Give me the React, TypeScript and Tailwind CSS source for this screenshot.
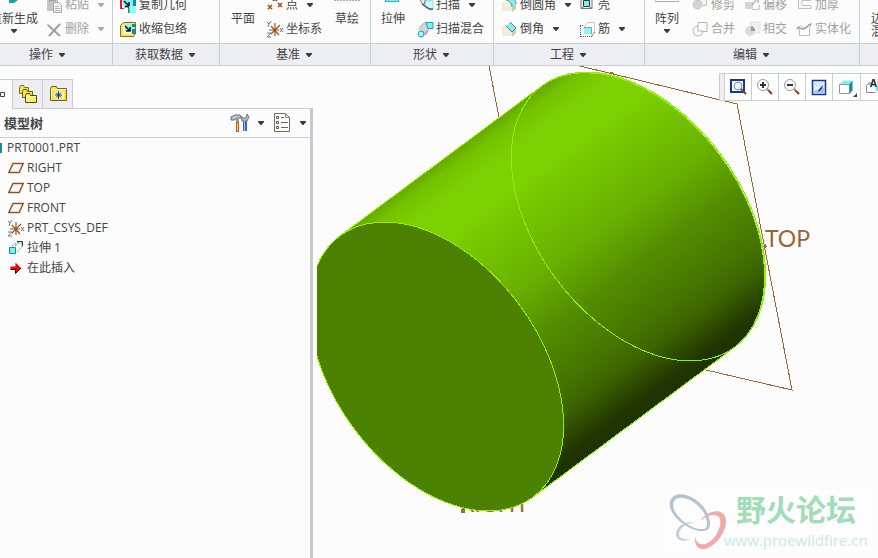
import type { ReactNode } from "react";
import clsx from "clsx";

const FONT =
  "font-['Open_Sans','Noto_Sans_CJK_SC',sans-serif] text-[12px] leading-[16px] text-[#444]";

type IconProps = { children: ReactNode; size?: number };

const Icon = ({ children, size = 17 }: IconProps) => (
  <svg
    width={size}
    height={size}
    viewBox={`0 0 ${size} ${size}`}
    fill="none"
    className="shrink-0"
    aria-hidden="true"
  >
    {children}
  </svg>
);

const Caret = ({ muted = false }: { muted?: boolean }) => (
  <svg width="6" height="4" viewBox="0 0 6 4" className="shrink-0" aria-hidden="true">
    <path d="M0 0h6v1L3.5 4h-1L0 1z" fill={muted ? "#a9a9a9" : "#3c3c3c"} />
  </svg>
);

/* ---------- ribbon icons ---------- */

const PasteIcon = () => (
  <Icon>
    <path d="M1 2h11v12H1z" fill="#c4c4c4" />
    <path d="M3 0h7v4H3z" fill="#a0a0a0" />
    <path d="M7.500 5.500h5l3 3v7h-8z" fill="#f4f4f4" stroke="#a8a8a8" />
    <path d="M9 9.500h4M9 11.500h5M9 13.500h5" stroke="#b5b5b5" />
  </Icon>
);

const DeleteIcon = () => (
  <Icon>
    <path d="M2 4l12 11M14 3L3 15" stroke="#a0a0a0" strokeWidth="2" />
    <path d="M1 3l3 2M2 15l2-2" stroke="#bdbdbd" />
  </Icon>
);

const CopyGeomIcon = () => (
  <Icon>
    <path d="M0 1h4v11H0z" fill="#e02020" />
    <path d="M2 1h9v10H2z" fill="#fff" />
    <path d="M2 3h12v8H4z" fill="#86eef2" />
    <path d="M4 4l5 5M9 5v4.500H5" stroke="#111" strokeWidth="1.500" />
    <path d="M9 9h7v7H9z" fill="#8ff8fa" />
    <path d="M13 3h3v6h-3zM8 10h1.500v6H8z" fill="#0d8f92" />
  </Icon>
);

const ShrinkwrapIcon = () => (
  <Icon>
    <path d="M.5 4.500l3-3h12v11l-2 3H.5z" fill="#f7e46a" stroke="#8b6d12" />
    <path d="M3 4h9v9H3z" fill="#fff6b8" />
    <path d="M5 3h9v7H5z" fill="#8df3f5" />
    <path d="M5 5l5 5M10 6v4H6" stroke="#111" strokeWidth="1.500" />
    <path d="M12 3h4v3h-4zM12 8h4v5h-4z" fill="#148a8c" />
  </Icon>
);

const PointIcon = () => (
  <Icon>
    <path
      d="M6 0l4 4M10 0L6 4M1 8l4 4M5 8l-4 4M11 6l4 4M15 6l-4 4"
      stroke="#96521e"
      strokeWidth="1.600"
    />
  </Icon>
);

const CsysIcon = () => (
  <Icon>
    <path
      d="M2 9h10M8 2v13M4 5l8 9M13 4L4 13"
      stroke="#9a5622"
      strokeWidth="1.200"
    />
    <path
      d="M0 1l2 2 2-3M2 3L1 6M13 7l3 4M16 7l-3 4M0 12h4l-4 4h4"
      stroke="#777"
    />
  </Icon>
);

const SweepIcon = () => (
  <Icon>
    <path d="M5 3l9-3 2 12-5 1z" fill="#d6d6d6" />
    <path d="M9 4l7-1v9l-8-1z" fill="#cffafa" stroke="#9adfe0" />
    <path d="M1.500.5l7 2-2 6z" fill="#eee" stroke="#777" />
    <path d="M5 7l9 6" stroke="#555" strokeWidth="1.500" />
    <path d="M13 12h3" stroke="#0fa5aa" strokeWidth="2" />
  </Icon>
);

const SweptBlendIcon = () => (
  <Icon>
    <path d="M3 9c1-5 4-8 9-8l4 6c-5 0-7 4-9 8z" fill="#d4d4d4" />
    <path d="M2 9c1-4 4-7 8-8" stroke="#aaa" />
    <path d="M9 1.500h7v6h-5z" fill="#86eef2" stroke="#0fa5aa" />
    <circle cx="4" cy="13" r="3" fill="#a8f6f6" stroke="#0fa5aa" />
    <path d="M8 14l3-5" stroke="#aaa" strokeWidth="2" />
  </Icon>
);

const RoundIcon = () => (
  <Icon>
    <path d="M1 5h7l3 4v5H1z" fill="#efecdc" />
    <path d="M11 9l4-3v6l-4 3z" fill="#cfcab0" />
    <path d="M3 2l5-2c4 1 7 4 7 7l-4 4c0-4-3-7-8-9z" fill="#86eef2" />
    <path d="M5 3c4 1 6 4 6 7M9 0c4 1 6 4 6 7" stroke="#5f8a89" />
  </Icon>
);

const ChamferIcon = () => (
  <Icon>
    <path d="M1 5h5l5 6v4H1z" fill="#efecdc" />
    <path d="M11 11l4-4v5l-4 4z" fill="#cfcab0" />
    <path d="M5 5l4-4 6 6-4 4z" fill="#86eef2" />
    <path d="M5 5l6 6 4-4M9 1l6 6" stroke="#5f7675" />
  </Icon>
);

const ShellIcon = () => (
  <Icon>
    <path d="M2 1.500h11v10H2z" fill="#f4f4f4" stroke="#777" />
    <path d="M4.500 3.500h6v6h-6z" fill="#7ff0f2" stroke="#333" />
    <path d="M2 11.500l3-2M13 11.500l-3-2" stroke="#777" />
  </Icon>
);

const RibIcon = () => (
  <Icon>
    <path d="M4.500 6.500l4-5h7v9l-3 5" stroke="#c8c8c8" />
    <path d="M5 7h7v6H5z" fill="#86f8fa" />
    <path d="M1 4.500h3M1.500 5v11M2 15.500h11M13 15l3-4" stroke="#555" strokeDasharray="1 1" />
    <path d="M5 6.500h7.500V13" stroke="#999" />
  </Icon>
);

const TrimIcon = () => (
  <Icon>
    <path d="M6.500.5h8v8h-4" fill="#f4f4f4" stroke="#c0c0c0" />
    <circle cx="5.500" cy="7.500" r="4.500" fill="#d4d4d4" stroke="#c4c4c4" />
  </Icon>
);

const MergeIcon = () => (
  <Icon>
    <path d="M6 5.500v-4h9v9h-4" stroke="#b4b4b4" />
    <path d="M6 5a5 5 0 1 0 5 5H6z" stroke="#b4b4b4" />
  </Icon>
);

const OffsetIcon = () => (
  <Icon>
    <path d="M1 5h8v7H1z" fill="#d4d4d4" />
    <path d="M1 1h7M15.500 8v4" stroke="#b5b5b5" strokeDasharray="2 1" />
    <path d="M8 8l5-6M10 1.500h4V6" stroke="#888" />
    <path d="M8 12.500h7V9" stroke="#c5c5c5" />
  </Icon>
);

const IntersectIcon = () => (
  <Icon>
    <path d="M6 1h10v11H9z" fill="#f0f0f0" stroke="#e4e4e4" />
    <circle cx="6" cy="10" r="5" fill="#dadada" />
    <path d="M7 5a5 5 0 0 1 4 5H7z" fill="#9c9c9c" />
  </Icon>
);

const ThickenIcon = () => (
  <Icon>
    <path d="M15 .5H2.500v11H15v-3H6V3.500h9" fill="#f8f8f8" stroke="#c0c0c0" />
  </Icon>
);

const SolidifyIcon = () => (
  <Icon>
    <path d="M3.500 14.500v-6l-3-1 4-3 3 2c2 1 4-2 8-4l-2 4v8z" stroke="#bcbcbc" />
    <path d="M1 7c3-2 4 2 7 1s3-4 7-5" stroke="#8f8f8f" strokeWidth="1.200" />
  </Icon>
);

/* ---------- ribbon ---------- */

type ToolProps = {
  icon: ReactNode;
  label: string;
  menu?: boolean;
  muted?: boolean;
};

const Tool = ({ icon, label, menu = false, muted = false }: ToolProps) => (
  <button
    type="button"
    className={clsx(
      "flex h-6 items-center whitespace-nowrap",
      muted && "text-[#a0a0a0]"
    )}
  >
    {icon}
    <span className="ml-[2px]">{label}</span>
    {menu && (
      <span className="ml-[9px]">
        <Caret muted={muted} />
      </span>
    )}
  </button>
);

type BigToolProps = { label: string; menu?: boolean; children?: ReactNode };

const BigTool = ({ label, menu = false, children }: BigToolProps) => (
  <button
    type="button"
    className="flex h-[43px] flex-col items-center whitespace-nowrap"
  >
    <span className="flex h-[11px] items-start">{children}</span>
    <span>{label}</span>
    {menu && (
      <span className="mt-[2px] flex">
        <Caret />
      </span>
    )}
  </button>
);

type GroupProps = { title: string; width: string; children: ReactNode };

const Group = ({ title, width, children }: GroupProps) => (
  <section className={clsx("flex shrink-0 flex-col border-r border-[#c9ccd0]", width)}>
    <div className="flex h-[43px] items-end pb-[2px]">{children}</div>
    <button
      type="button"
      className="flex h-[23px] items-center justify-center gap-[6px] border-y border-[#c9ccd0] bg-[#edeef1] pr-[2px]"
    >
      {title}
      <Caret />
    </button>
  </section>
);

const Column = ({ children }: { children: ReactNode }) => (
  <div className="flex shrink-0 flex-col">{children}</div>
);

const Ribbon = () => (
  <header className="-ml-4 flex h-[66px] overflow-hidden">
    <Group title="操作" width="w-[129px]">
      <div className="ml-[6px] -mb-[2px]">
        <BigTool label="重新生成" menu>
          <svg width="10" height="4" viewBox="0 0 10 4" aria-hidden="true">
            <path d="M0 0h9L5 3H0z" fill="#1aa3a6" />
          </svg>
        </BigTool>
      </div>
      <div className="ml-2">
        <Column>
          <Tool icon={<PasteIcon />} label="粘贴" menu muted />
          <Tool icon={<DeleteIcon />} label="删除" menu muted />
        </Column>
      </div>
    </Group>

    <Group title="获取数据" width="w-[107px]">
      <div className="ml-[7px]">
        <Column>
          <Tool icon={<CopyGeomIcon />} label="复制几何" />
          <Tool icon={<ShrinkwrapIcon />} label="收缩包络" />
        </Column>
      </div>
    </Group>

    <Group title="基准" width="w-[151px]">
      <div className="ml-[11px] -mb-[2px]">
        <BigTool label="平面" />
      </div>
      <div className="ml-3">
        <Column>
          <Tool icon={<PointIcon />} label="点" menu />
          <Tool icon={<CsysIcon />} label="坐标系" />
        </Column>
      </div>
      <div className="ml-3 -mb-[2px]">
        <BigTool label="草绘">
          <svg width="26" height="1" viewBox="0 0 26 1" aria-hidden="true">
            <path d="M0 .5h26" stroke="#aaa" strokeDasharray="2 1" />
          </svg>
        </BigTool>
      </div>
    </Group>

    <Group title="形状" width="w-[123px]">
      <div className="ml-[10px] -mb-[2px]">
        <BigTool label="拉伸">
          <svg width="18" height="2" viewBox="0 0 18 2" aria-hidden="true">
            <path d="M1 0h14v2H1z" fill="#2bb3b7" />
            <path d="M2 0h12v1H2z" fill="#86eef2" />
          </svg>
        </BigTool>
      </div>
      <div className="ml-3">
        <Column>
          <Tool icon={<SweepIcon />} label="扫描" menu />
          <Tool icon={<SweptBlendIcon />} label="扫描混合" />
        </Column>
      </div>
    </Group>

    <Group title="工程" width="w-[151px]">
      <div className="ml-[7px] flex gap-2">
        <Column>
          <Tool icon={<RoundIcon />} label="倒圆角" menu />
          <Tool icon={<ChamferIcon />} label="倒角" menu />
        </Column>
        <Column>
          <Tool icon={<ShellIcon />} label="壳" />
          <Tool icon={<RibIcon />} label="筋" menu />
        </Column>
      </div>
    </Group>

    <Group title="编辑" width="w-[215px]">
      <div className="ml-[10px] -mb-[2px]">
        <BigTool label="阵列" menu>
          <svg width="24" height="2" viewBox="0 0 24 2" aria-hidden="true">
            <path d="M0 0v1.500h24V0" fill="none" stroke="#aaa" />
          </svg>
        </BigTool>
      </div>
      <div className="ml-[13px] flex gap-[9px]">
        <Column>
          <Tool icon={<TrimIcon />} label="修剪" muted />
          <Tool icon={<MergeIcon />} label="合并" muted />
        </Column>
        <Column>
          <Tool icon={<OffsetIcon />} label="偏移" muted />
          <Tool icon={<IntersectIcon />} label="相交" muted />
        </Column>
        <Column>
          <Tool icon={<ThickenIcon />} label="加厚" muted />
          <Tool icon={<SolidifyIcon />} label="实体化" muted />
        </Column>
      </div>
    </Group>

    <section className="flex min-w-0 grow flex-col overflow-hidden">
      <div className="flex h-[43px] items-end pb-[5px] pl-[11px]">
        <button type="button" className="flex shrink-0 flex-col leading-[13px]">
          <span>边界</span>
          <span>混合</span>
        </button>
      </div>
      <div className="h-[23px] border-y border-[#c9ccd0] bg-[#edeef1]" />
    </section>
  </header>
);

/* ---------- model tree ---------- */

const FoldersIcon = () => (
  <Icon size={20}>
    <path d="M1.500 3.500l1-2h3l1 2h4v6h-9z" fill="#f2e14e" stroke="#7d6e2c" />
    <path d="M4.500 7.500l1-2h3l1 2h5v6h-10z" fill="#f2e14e" stroke="#6a5c24" />
    <path d="M7.500 11.500l1-2h3l1 2h6v7h-11z" fill="#fbee5c" stroke="#4d4218" />
    <path d="M8.500 18v-5.500H18" stroke="#fffbd0" />
  </Icon>
);

const FavoritesIcon = () => (
  <Icon size={20}>
    <path d="M2.500 4.500l1-2h5l1 2h9v12h-16z" fill="#f7e03a" stroke="#6e6324" />
    <path d="M3.500 16V5.500H18" stroke="#fffbd0" />
    <path d="M6 7h10v8H6z" fill="#fff79a" />
    <path d="M10.500 7v8M7 11h7M8 8.500l5 5M13 8.500l-5 5" stroke="#1030b8" />
  </Icon>
);

const ToolsIcon = () => (
  <Icon size={20}>
    <path d="M1 7V4l4-2h5l2 3H7L4 7z" fill="#c4c8ca" stroke="#666" />
    <path d="M6 6h3v3H6z" fill="#999" />
    <path d="M6 9h3v10H6z" fill="#c85a14" />
    <path d="M7.500 10v8" stroke="#f5d08a" />
    <path d="M11 3l2 2h3l1-4 2 3-2 4h-5z" fill="#b4b8ba" stroke="#777" />
    <path d="M13 8h4v10h-4z" fill="#2f66c8" />
    <path d="M14.500 7v11" stroke="#9cc2f5" />
  </Icon>
);

const ListIcon = () => (
  <Icon size={20}>
    <path d="M2.500.5h11l4 4v14h-15z" fill="#fdfdf6" stroke="#6c6c62" />
    <path d="M13.500.5v4h4" stroke="#888" />
    <path d="M9 4.500h3M9 9.500h7M9 14.500h7" stroke="#666" />
    <path d="M4.500 3.500h2v2h-2zM4.500 8.500h2v2h-2zM4.500 13.500h2v2h-2z" stroke="#555" />
  </Icon>
);

const PlaneIcon = () => (
  <Icon size={16}>
    <path d="M.8 12.500L5 3.500h10.200l-4 9z" stroke="#96521e" strokeWidth="1.500" />
  </Icon>
);

const ExtrudeIcon = () => (
  <Icon size={16}>
    <path d="M4 6l6-4h4v5l-5 5" stroke="#888" strokeDasharray="2 1" />
    <path d="M9 1.500h5.500V6" stroke="#333" />
    <path d="M7 6l5-4" stroke="#1aa3a6" strokeDasharray="2 1" />
    <path d="M1.500 7.500h6v6h-6z" fill="#86eef2" stroke="#178f92" />
  </Icon>
);

const InsertIcon = () => (
  <Icon size={16}>
    <path d="M2.500 6.500h5v-4l5.500 5.500-5.500 5.500v-4h-5z" fill="#f00" />
    <path d="M2.500 9.500h5v4L13 8" stroke="#3a0000" />
  </Icon>
);

const items = [
  { label: "RIGHT", icon: <PlaneIcon /> },
  { label: "TOP", icon: <PlaneIcon /> },
  { label: "FRONT", icon: <PlaneIcon /> },
  { label: "PRT_CSYS_DEF", icon: <CsysIcon /> },
  { label: "拉伸 1", icon: <ExtrudeIcon /> },
  { label: "在此插入", icon: <InsertIcon /> },
];

const ModelTree = () => (
  <aside className="flex w-[313px] shrink-0 flex-col pt-[13px]">
    <div className="flex">
      <button
        type="button"
        aria-label="模型树"
        className="flex h-[30px] w-3 items-center border-t border-[#c9ccd0]"
      >
        <svg width="5" height="5" viewBox="0 0 5 5" fill="none" aria-hidden="true">
          <path d="M.5.5h4v4h-4z" stroke="#444" />
        </svg>
      </button>
      <button
        type="button"
        aria-label="文件夹浏览器"
        className="flex h-[30px] w-[31px] items-center justify-center border border-[#c9ccd0] bg-[#edeef1]"
      >
        <FoldersIcon />
      </button>
      <button
        type="button"
        aria-label="收藏夹"
        className="flex h-[30px] w-[30px] items-center justify-center border border-l-0 border-[#c9ccd0] bg-[#edeef1]"
      >
        <FavoritesIcon />
      </button>
      <div className="grow border-b border-[#c9ccd0]" />
    </div>
    <div className="flex grow flex-col border-r-[3px] border-[#c5c9cc]">
      <div className="flex h-[29px] items-center border-b border-[#c9ccd0] pr-1 pl-1">
        <h2 className="grow text-[13px] font-bold">模型树</h2>
        <button type="button" aria-label="设置" className="flex items-center gap-2">
          <ToolsIcon />
          <Caret />
        </button>
        <button type="button" aria-label="显示" className="ml-2 flex items-center gap-2">
          <ListIcon />
          <Caret />
        </button>
      </div>
      <div className="flex h-5 items-center">
        <span className="h-[10px] w-[2px] bg-[#178f92]" />
        <span className="ml-[5px]">PRT0001.PRT</span>
      </div>
      <ul>
        {items.map((item) => (
          <li key={item.label} className="flex h-5 items-center pl-2">
            <span className="flex w-[19px] shrink-0">{item.icon}</span>
            {item.label}
          </li>
        ))}
      </ul>
    </div>
  </aside>
);

/* ---------- graphics area ---------- */

const Lens = () => (
  <>
    <circle cx="8" cy="8" r="5.500" fill="#fff" stroke="#9a9a9a" />
    <path d="M12 12l5 5" stroke="#7c4028" strokeWidth="2" />
    <path d="M12 12l1.500 1.500" stroke="#c8a060" strokeWidth="2" />
  </>
);

const viewTools = [
  {
    label: "重新调整",
    icon: (
      <Icon size={20}>
        <path d="M3 3h13v12H3z" stroke="#0b3a9c" strokeWidth="2" />
        <circle cx="10" cy="9" r="4" fill="#e8f2f2" stroke="#888" />
        <path d="M13 12l5 5" stroke="#7c4028" strokeWidth="2" />
      </Icon>
    ),
  },
  {
    label: "放大",
    icon: (
      <Icon size={20}>
        <Lens />
        <path d="M5 8h6M8 5v6" stroke="#333" strokeWidth="2" />
      </Icon>
    ),
  },
  {
    label: "缩小",
    icon: (
      <Icon size={20}>
        <Lens />
        <path d="M5 8h6" stroke="#333" strokeWidth="2" />
      </Icon>
    ),
  },
  {
    label: "重画",
    icon: (
      <Icon size={20}>
        <path d="M3.500 3.500h13v14h-13z" fill="#e4f0f8" stroke="#0b3a9c" strokeWidth="1.500" />
        <path d="M5 14l10-4v6H5z" fill="#a9c6e6" />
        <path d="M6 6.500h8M7 8.500h8" stroke="#b4c4d0" strokeDasharray="1 2" />
        <path d="M9 15c1-3 2-4 5-7-1 4-2 6-5 7z" fill="#1c3f94" />
      </Icon>
    ),
  },
];

const ViewToolbar = () => (
  <div className="absolute top-[7px] right-0 flex h-7 w-[159px] overflow-hidden border border-r-0 border-[#c9ccd0] bg-[#edeef1] pl-1">
    {viewTools.map((tool) => (
      <button
        key={tool.label}
        type="button"
        aria-label={tool.label}
        className="flex w-[27px] shrink-0 items-center justify-center border-l border-[#c9ccd0] bg-white"
      >
        {tool.icon}
      </button>
    ))}
    <button
      type="button"
      aria-label="显示样式"
      className="flex w-[28px] shrink-0 items-center justify-center border-l border-[#c9ccd0] bg-white"
    >
      <svg width="22" height="22" viewBox="0 0 22 22" fill="none" aria-hidden="true">
        <path d="M3.500 8.500h10v9h-10z" fill="#fff" stroke="#8a9a9a" />
        <path d="M3.500 8l4-3.500h9l-3 3.500z" fill="#7ff0f2" />
        <path d="M13.500 8l3-3.500v10l-3 3.500z" fill="#0e8f92" />
        <path d="M21 17v4h-4z" fill="#444" />
      </svg>
    </button>
    <button
      type="button"
      aria-label="已命名视图"
      className="flex w-[27px] shrink-0 items-center border-l border-[#c9ccd0] bg-white pl-1"
    >
      <svg width="22" height="20" viewBox="0 0 22 20" fill="none" aria-hidden="true">
        <path d="M5.500 5.500h-1l-3 3v7h9" stroke="#888" />
        <path d="M2 8l3-2.500h2l-1 2.500zM11 10h4v4h-4z" fill="#5fe3e6" />
        <text x="5" y="10" fontSize="10" fontWeight="bold" fill="#222">
          AB
        </text>
      </svg>
    </button>
  </div>
);

const Model = () => (
  <svg
    width="561"
    height="492"
    viewBox="317 66 561 492"
    fill="none"
    className="ml-1 block max-w-none"
    role="img"
    aria-label="PRT0001"
  >
    <defs>
      <linearGradient
        id="side"
        gradientUnits="userSpaceOnUse"
        x1="542.300"
        y1="85.600"
        x2="734.500"
        y2="347.400"
      >
        <stop offset="0" stopColor="#64a800" />
        <stop offset=".04" stopColor="#74c200" />
        <stop offset=".1" stopColor="#7ccf00" />
        <stop offset=".2" stopColor="#7dd100" />
        <stop offset=".28" stopColor="#76c600" />
        <stop offset=".36" stopColor="#70bd00" />
        <stop offset=".46" stopColor="#69b000" />
        <stop offset=".54" stopColor="#5e9f00" />
        <stop offset=".62" stopColor="#538c00" />
        <stop offset=".7" stopColor="#4c8000" />
        <stop offset=".78" stopColor="#457300" />
        <stop offset=".85" stopColor="#3c6400" />
        <stop offset=".91" stopColor="#2d4b00" />
        <stop offset=".96" stopColor="#203500" />
        <stop offset="1" stopColor="#1e3200" />
      </linearGradient>
    </defs>
    <g shapeRendering="crispEdges" stroke="#996633">
      <path d="M489 66l10 51M580 66l157 38 55 286-86-20" />
      <path d="M609 76v-2l3-2 2 3M461 509h3v3h-3zM763 246h4M765 244v4" />
    </g>
    <g fill="#996633" fontFamily="Lato, sans-serif" fontSize="23">
      <text x="765" y="247">
        TOP
      </text>
      <text x="460" y="512">
        RIGHT
      </text>
    </g>
    <g shapeRendering="crispEdges" stroke="#94f000">
      <path
        d="M340.400 235.600L542.300 85.600A162.400 103.300 53.700 0 1 734.500 347.400L532.600 497.400z"
        fill="url(#side)"
      />
      <ellipse
        rx="162.400"
        ry="103.300"
        transform="translate(638.400 216.500) rotate(53.700)"
      />
      <ellipse
        rx="162.400"
        ry="103.300"
        transform="translate(436.500 366.500) rotate(53.700)"
        fill="#4c8000"
      />
    </g>
  </svg>
);

const Watermark = () => (
  <div className="absolute right-[6px] bottom-1 flex h-[64px] w-[206px] items-start bg-[#fdfdfd]">
    <svg width="62" height="62" viewBox="0 0 62 62" className="shrink-0" aria-hidden="true">
      <path
        d="M8 6C20-1 44 15 44 34c0 5-3 7-7 7C20 42-7 17 8 6zM10 9C-1 18 22 40 36 39c4 0 5-2 5-5C41 18 20 3 10 9z"
        fill="#b4c3d1"
      />
      <path
        d="M34 31c6-9 20-14 25-5 5 12-9 31-20 33-7 1-11-4-10-13 1 7 5 9 10 8 9-2 19-19 14-27-4-4-12-2-19 4z"
        fill="#f2a9ac"
      />
      <path
        d="M29 33c-9-3-20 4-19 12 1 6 8 7 15 4-6 1-12 0-12-5 0-6 8-12 16-11z"
        fill="#c3ced8"
      />
    </svg>
    <div className="-ml-1 flex flex-col whitespace-nowrap">
      <span className="ml-3 text-[30px] leading-[40px] font-bold text-[#a3dcb9]">
        野火论坛
      </span>
      <a href="#" className="text-[15px] leading-[20px] text-[#cbe9e6]">
        www.proewildfire.cn
      </a>
    </div>
  </div>
);

const App = () => {
  return (
    <div className={clsx("flex min-h-screen flex-col overflow-hidden bg-[#fcfcfc]", FONT)}>
      <Ribbon />
      <div className="flex grow">
        <ModelTree />
        <main className="relative min-w-0 grow overflow-hidden">
          <Model />
          <ViewToolbar />
          <Watermark />
        </main>
      </div>
    </div>
  );
};

export default App;
